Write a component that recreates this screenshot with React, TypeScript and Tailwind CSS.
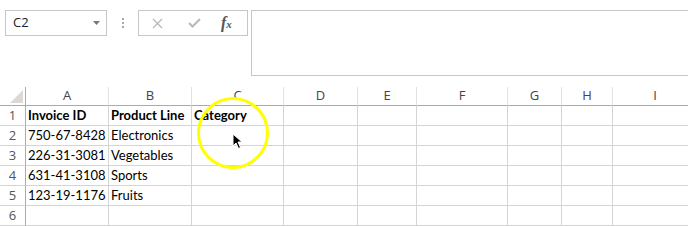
import React from "react";

const cols = [
  { l: "A", w: 83 },
  { l: "B", w: 83 },
  { l: "C", w: 92 },
  { l: "D", w: 74 },
  { l: "E", w: 59 },
  { l: "F", w: 91 },
  { l: "G", w: 54 },
  { l: "H", w: 51 },
  { l: "I", w: 84 },
];

const data: string[][] = [
  ["Invoice ID", "Product Line", "Category"],
  ["750-67-8428", "Electronics"],
  ["226-31-3081", "Vegetables"],
  ["631-41-3108", "Sports"],
  ["123-19-1176", "Fruits"],
  [],
];

const cellFont = { fontFamily: 'Lato, "Liberation Sans", sans-serif' };
const uiFont = { fontFamily: '"Open Sans", "Liberation Sans", sans-serif' };

export default function App() {
  const template = `26px ${cols.map((c) => c.w + "px").join(" ")}`;
  return (
    <div className="relative w-[688px] h-[226px] overflow-hidden bg-white">
      {/* formula bar area */}
      <div className="flex h-[87px] pt-[10px] pl-[5px]">
        <div
          className="flex w-[102px] h-[26px] border border-[#c6c6c6] items-center justify-between pl-[7px] pr-[6px] text-[13px] text-[#222]"
          style={uiFont}
        >
          <span>C2</span>
          <svg width="7" height="4" viewBox="0 0 7 4">
            <path d="M0 0 L7 0 L3.5 4 Z" fill="#777" />
          </svg>
        </div>
        <div className="w-[31px] h-[26px] flex flex-col items-center justify-center gap-[2px] pl-[1px]">
          <div className="w-[2px] h-[2px] bg-[#a8a8a8]" />
          <div className="w-[2px] h-[2px] bg-[#a8a8a8]" />
          <div className="w-[2px] h-[2px] bg-[#a8a8a8]" />
        </div>
        <div className="flex w-[110px] h-[26px] border border-[#c6c6c6] items-center">
          <svg className="ml-[13px]" width="11" height="11" viewBox="0 0 11 11">
            <path d="M1 1 L10 10 M10 1 L1 10" stroke="#b8b8b8" strokeWidth="1.3" />
          </svg>
          <svg className="ml-[25px]" width="13" height="10" viewBox="0 0 13 10">
            <path d="M1 5 L4.5 8.5 L12 1" stroke="#b8b8b8" strokeWidth="2" fill="none" />
          </svg>
          <span
            className="ml-[20px] text-[16px] italic font-bold text-[#555] leading-none"
            style={{ fontFamily: '"Liberation Serif", serif' }}
          >
            f<span className="text-[11px]">x</span>
          </span>
        </div>
        <div className="ml-[3px] flex-1 h-[66px] border-t border-l border-b border-[#c6c6c6]" />
      </div>

      {/* grid */}
      <div className="grid" style={{ gridTemplateColumns: template }}>
        {/* corner */}
        <div className="h-[19px] border-r border-b border-[#ababab] relative">
          <svg className="absolute left-[10px] top-[3px]" width="13" height="13" viewBox="0 0 13 13">
            <path d="M13 0 L13 13 L0 13 Z" fill="#dcd8d3" />
          </svg>
        </div>
        {cols.map((c, i) => (
          <div
            key={c.l}
            className={`h-[19px] border-b border-[#ababab] flex items-center justify-center text-[13px] text-[#444] ${
              i < cols.length - 1 ? "border-r border-r-[#e1e1e1]" : ""
            }`}
            style={uiFont}
          >
            {c.l}
          </div>
        ))}
        {data.map((row, r) => (
          <React.Fragment key={r}>
            <div
              className="h-[20px] border-r border-b border-r-[#ababab] border-b-[#d4d4d4] flex items-center justify-center text-[13px] text-[#555]"
              style={uiFont}
            >
              {r + 1}
            </div>
            {cols.map((c, ci) => (
              <div
                key={c.l}
                className={`h-[20px] border-b border-[#d4d4d4] flex items-end pb-[1px] pl-[2px] text-[13px] leading-[18px] text-black whitespace-nowrap ${
                  ci < cols.length - 1 ? "border-r" : ""
                } ${r === 0 ? "font-bold" : ""} ${ci === 1 ? "relative z-10" : ""}`}
                style={cellFont}
              >
                {row[ci] ?? ""}
              </div>
            ))}
          </React.Fragment>
        ))}
      </div>

      {/* yellow highlight circle */}
      <div className="absolute left-[197px] top-[97px] w-[72px] h-[72px] rounded-full border-[3px] border-[#ffff00]" />
      {/* cursor */}
      <svg className="absolute left-[232px] top-[133px]" width="12" height="18" viewBox="0 0 12 18">
        <path d="M1 1 L1 13 L4 10 L6.5 15.5 L8.5 14.5 L6 9 L10 9 Z" fill="#000" stroke="#fff" strokeWidth="1" />
      </svg>
    </div>
  );
}
